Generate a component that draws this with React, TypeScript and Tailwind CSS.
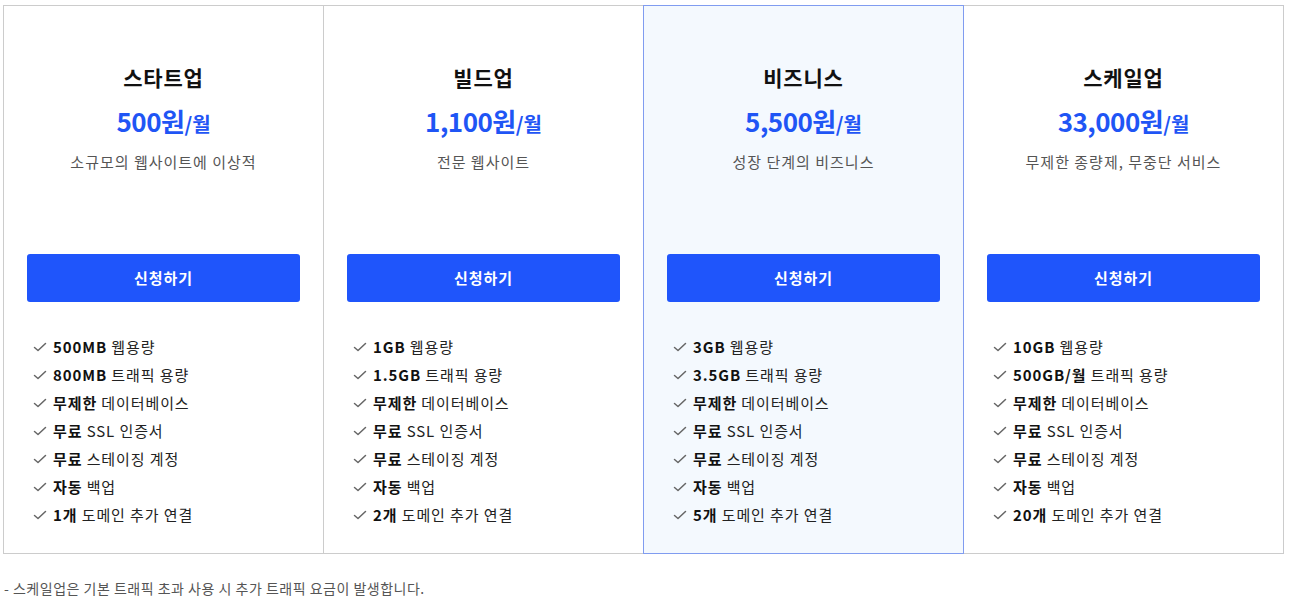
import React from "react";

type Plan = {
  name: string;
  price: string;
  desc: string;
  features: [string, string][];
  highlight?: boolean;
};

const plans: Plan[] = [
  {
    name: "스타트업",
    price: "500원",
    desc: "소규모의 웹사이트에 이상적",
    features: [
      ["500MB", " 웹용량"],
      ["800MB", " 트래픽 용량"],
      ["무제한", " 데이터베이스"],
      ["무료", " SSL 인증서"],
      ["무료", " 스테이징 계정"],
      ["자동", " 백업"],
      ["1개", " 도메인 추가 연결"],
    ],
  },
  {
    name: "빌드업",
    price: "1,100원",
    desc: "전문 웹사이트",
    features: [
      ["1GB", " 웹용량"],
      ["1.5GB", " 트래픽 용량"],
      ["무제한", " 데이터베이스"],
      ["무료", " SSL 인증서"],
      ["무료", " 스테이징 계정"],
      ["자동", " 백업"],
      ["2개", " 도메인 추가 연결"],
    ],
  },
  {
    name: "비즈니스",
    price: "5,500원",
    desc: "성장 단계의 비즈니스",
    highlight: true,
    features: [
      ["3GB", " 웹용량"],
      ["3.5GB", " 트래픽 용량"],
      ["무제한", " 데이터베이스"],
      ["무료", " SSL 인증서"],
      ["무료", " 스테이징 계정"],
      ["자동", " 백업"],
      ["5개", " 도메인 추가 연결"],
    ],
  },
  {
    name: "스케일업",
    price: "33,000원",
    desc: "무제한 종량제, 무중단 서비스",
    features: [
      ["10GB", " 웹용량"],
      ["500GB/월", " 트래픽 용량"],
      ["무제한", " 데이터베이스"],
      ["무료", " SSL 인증서"],
      ["무료", " 스테이징 계정"],
      ["자동", " 백업"],
      ["20개", " 도메인 추가 연결"],
    ],
  },
];

function CheckIcon() {
  return (
    <svg width="14" height="14" viewBox="0 0 14 14" className="shrink-0">
      <path d="M1.5 7.5 L5 10.5 L12.5 3.5" fill="none" stroke="#666" strokeWidth="1.5" strokeLinecap="round" strokeLinejoin="round" />
    </svg>
  );
}

function PlanCol({ plan, index }: { plan: Plan; index: number }) {
  let borderCls = "";
  if (index === 0) borderCls = "w-[320px] border-l border-[#cccccc]";
  else if (index === 1) borderCls = "w-[320px] border-l border-[#cccccc]";
  else if (index === 2) borderCls = "w-[321px] border border-[#809cf0] bg-[#f4f9fe] -my-px";
  else borderCls = "w-[320px] border-r border-[#cccccc]";
  return (
    <div className={`flex flex-col ${borderCls}`}>
      <div className="flex flex-col items-center pt-[56px]">
        <div className="text-[21px] font-bold text-[#111] leading-[30px] tracking-[0.8px]">{plan.name}</div>
        <div className="mt-[11px] text-[#1f55f5] font-bold leading-[36px]">
          <span className="text-[26px] tracking-[-0.5px]">{plan.price}</span>
          <span className="text-[20px]">/월</span>
        </div>
        <div className="mt-[7px] text-[15px] text-[#555] leading-[24px] tracking-[1px]">{plan.desc}</div>
      </div>
      <div className="px-[23px] mt-[80px]">
        <button className="w-full h-[48px] rounded-[3px] bg-[#1f55fb] text-white text-[15px] font-bold tracking-[1px]">신청하기</button>
      </div>
      <ul className="mt-[31px] pl-[29px] pb-[24px] flex flex-col">
        {plan.features.map(([b, r], i) => (
          <li key={i} className="flex items-center gap-[6px] h-[28px] text-[15px] text-[#222] tracking-[0.9px]">
            <CheckIcon />
            <span>
              <b className="font-bold text-[#111]">{b}</b>
              {r}
            </span>
          </li>
        ))}
      </ul>
    </div>
  );
}

export default function App() {
  return (
    <div className="bg-white w-[1291px] h-[603px] overflow-hidden" style={{ fontFamily: '"Noto Sans CJK KR", "Noto Sans", sans-serif' }}>
      <div className="pt-[5px] pl-[3px]">
        <div className="flex w-fit border-t border-b border-[#cccccc]">
          {plans.map((p, i) => (
            <PlanCol key={i} plan={p} index={i} />
          ))}
        </div>
        <div className="mt-[24px] pl-[1px] text-[14px] text-[#555] leading-[20px] tracking-[0.5px]">- 스케일업은 기본 트래픽 초과 사용 시 추가 트래픽 요금이 발생합니다.</div>
      </div>
    </div>
  );
}
